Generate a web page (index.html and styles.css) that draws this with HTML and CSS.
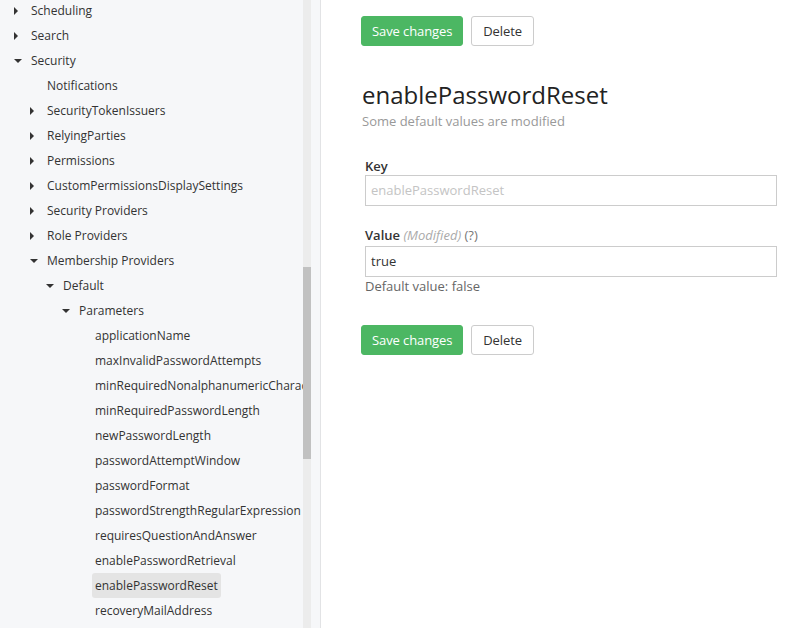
FILE: index.html
```html
<!DOCTYPE html>
<html>
<head>
<meta charset="utf-8">
<link rel="stylesheet" href="styles.css">
</head>
<body>
<div class="app">
  <aside class="sidebar">
    <div class="tree">
      <div class="row lvl0"><span class="slot"><i class="caret right"></i></span><span class="label">Scheduling</span></div>
      <div class="row lvl0"><span class="slot"><i class="caret right"></i></span><span class="label">Search</span></div>
      <div class="row lvl0"><span class="slot"><i class="caret down"></i></span><span class="label">Security</span></div>
      <div class="row lvl1"><span class="slot"></span><span class="label">Notifications</span></div>
      <div class="row lvl1"><span class="slot"><i class="caret right"></i></span><span class="label">SecurityTokenIssuers</span></div>
      <div class="row lvl1"><span class="slot"><i class="caret right"></i></span><span class="label">RelyingParties</span></div>
      <div class="row lvl1"><span class="slot"><i class="caret right"></i></span><span class="label">Permissions</span></div>
      <div class="row lvl1"><span class="slot"><i class="caret right"></i></span><span class="label">CustomPermissionsDisplaySettings</span></div>
      <div class="row lvl1"><span class="slot"><i class="caret right"></i></span><span class="label">Security Providers</span></div>
      <div class="row lvl1"><span class="slot"><i class="caret right"></i></span><span class="label">Role Providers</span></div>
      <div class="row lvl1"><span class="slot"><i class="caret down"></i></span><span class="label">Membership Providers</span></div>
      <div class="row lvl2"><span class="slot"><i class="caret down"></i></span><span class="label">Default</span></div>
      <div class="row lvl3"><span class="slot"><i class="caret down"></i></span><span class="label">Parameters</span></div>
      <div class="row lvl4"><span class="slot"></span><span class="label">applicationName</span></div>
      <div class="row lvl4"><span class="slot"></span><span class="label">maxInvalidPasswordAttempts</span></div>
      <div class="row lvl4"><span class="slot"></span><span class="label">minRequiredNonalphanumericCharacters</span></div>
      <div class="row lvl4"><span class="slot"></span><span class="label">minRequiredPasswordLength</span></div>
      <div class="row lvl4"><span class="slot"></span><span class="label">newPasswordLength</span></div>
      <div class="row lvl4"><span class="slot"></span><span class="label">passwordAttemptWindow</span></div>
      <div class="row lvl4"><span class="slot"></span><span class="label">passwordFormat</span></div>
      <div class="row lvl4"><span class="slot"></span><span class="label">passwordStrengthRegularExpression</span></div>
      <div class="row lvl4"><span class="slot"></span><span class="label">requiresQuestionAndAnswer</span></div>
      <div class="row lvl4"><span class="slot"></span><span class="label">enablePasswordRetrieval</span></div>
      <div class="row lvl4"><span class="slot"></span><span class="label selected">enablePasswordReset</span></div>
      <div class="row lvl4"><span class="slot"></span><span class="label">recoveryMailAddress</span></div>
    </div>
    <div class="scrollbar"><div class="thumb"></div></div>
  </aside>
  <main class="main">
    <div class="actions">
      <button class="btn btn-primary">Save changes</button>
      <button class="btn btn-default">Delete</button>
    </div>
    <h1 class="title">enablePasswordReset</h1>
    <p class="subtitle">Some default values are modified</p>
    <form class="form">
      <div class="field field-key">
        <label class="field-label">Key</label>
        <div class="input disabled">enablePasswordReset</div>
      </div>
      <div class="field field-value">
        <label class="field-label">Value <em class="modified">(Modified)</em> <span class="help">(?)</span></label>
        <div class="input">true</div>
        <div class="hint">Default value: false</div>
      </div>
    </form>
    <div class="actions actions-bottom">
      <button class="btn btn-primary">Save changes</button>
      <button class="btn btn-default">Delete</button>
    </div>
  </main>
</div>
</body>
</html>
```

FILE: styles.css
```css
* { box-sizing: border-box; }
html, body { margin: 0; padding: 0; height: 100%; }
body {
  font-family: "Open Sans", "Noto Sans", sans-serif;
  font-size: 13px;
  color: #333;
  background: #fff;
  overflow: hidden;
}
.app {
  display: flex;
  height: 628px;
}
.sidebar {
  width: 321px;
  flex: none;
  display: flex;
  background: #f6f7f9;
  border-right: 1px solid #e2e3e5;
  padding-right: 9px;
  overflow: hidden;
}
.tree {
  width: 303px;
  flex: none;
  overflow: hidden;
  margin-top: -2px;
  font-size: 12px;
}
.row {
  display: flex;
  align-items: center;
  height: 25px;
  white-space: nowrap;
}
.lvl0 { padding-left: 12px; }
.lvl1 { padding-left: 28px; }
.lvl2 { padding-left: 44px; }
.lvl3 { padding-left: 60px; }
.lvl4 { padding-left: 76px; }
.slot {
  width: 16px;
  flex: none;
  display: flex;
  align-items: center;
}
.caret {
  display: block;
  margin-left: 2px;
  width: 0;
  height: 0;
}
.caret.right {
  border-left: 4px solid #333;
  border-top: 4px solid transparent;
  border-bottom: 4px solid transparent;
}
.caret.down {
  border-top: 4px solid #333;
  border-left: 4px solid transparent;
  border-right: 4px solid transparent;
}
.label {
  display: block;
  line-height: 25px;
  padding: 0 3px;
  border-radius: 3px;
  color: #333;
}
.label.selected { background: #e4e4e4; }
.scrollbar {
  width: 8px;
  flex: none;
  background: #ececec;
}
.thumb {
  margin-top: 267px;
  height: 192px;
  background: #c1c1c1;
}
.main {
  flex: 1;
  padding: 16px 9px 0 40px;
}
.actions {
  display: flex;
  gap: 8px;
}
.btn {
  font-family: inherit;
  font-size: 13px;
  letter-spacing: -0.1px;
  height: 30px;
  padding: 0 10px;
  border-radius: 3px;
  cursor: pointer;
}
.btn-primary {
  background: #4cb763;
  border: 1px solid #4cb763;
  color: #fff;
}
.btn-default {
  background: #fff;
  border: 1px solid #ccc;
  color: #333;
  padding: 0 11px;
}
.title {
  margin: 34px 0 0 1px;
  font-size: 24px;
  font-weight: 400;
  line-height: 30px;
  color: #222;
}
.subtitle {
  margin: 2px 0 0 1px;
  line-height: 18px;
  color: #999;
}
.form {
  padding-left: 4px;
  margin-top: 27px;
}
.field-label {
  display: block;
  font-weight: 600;
  line-height: 18px;
  color: #333;
}
.modified {
  font-weight: 400;
  color: #aaa;
}
.help {
  font-weight: 400;
  color: #777;
}
.input {
  height: 31px;
  border: 1px solid #ccc;
  padding: 0 5px;
  line-height: 29px;
  color: #333;
}
.input.disabled { color: #c4c4c4; }
.field-value { margin-top: 20px; }
.field-value .field-label { margin-bottom: 2px; }
.hint {
  line-height: 18px;
  color: #666;
}
.actions-bottom { margin-top: 30px; }
```
